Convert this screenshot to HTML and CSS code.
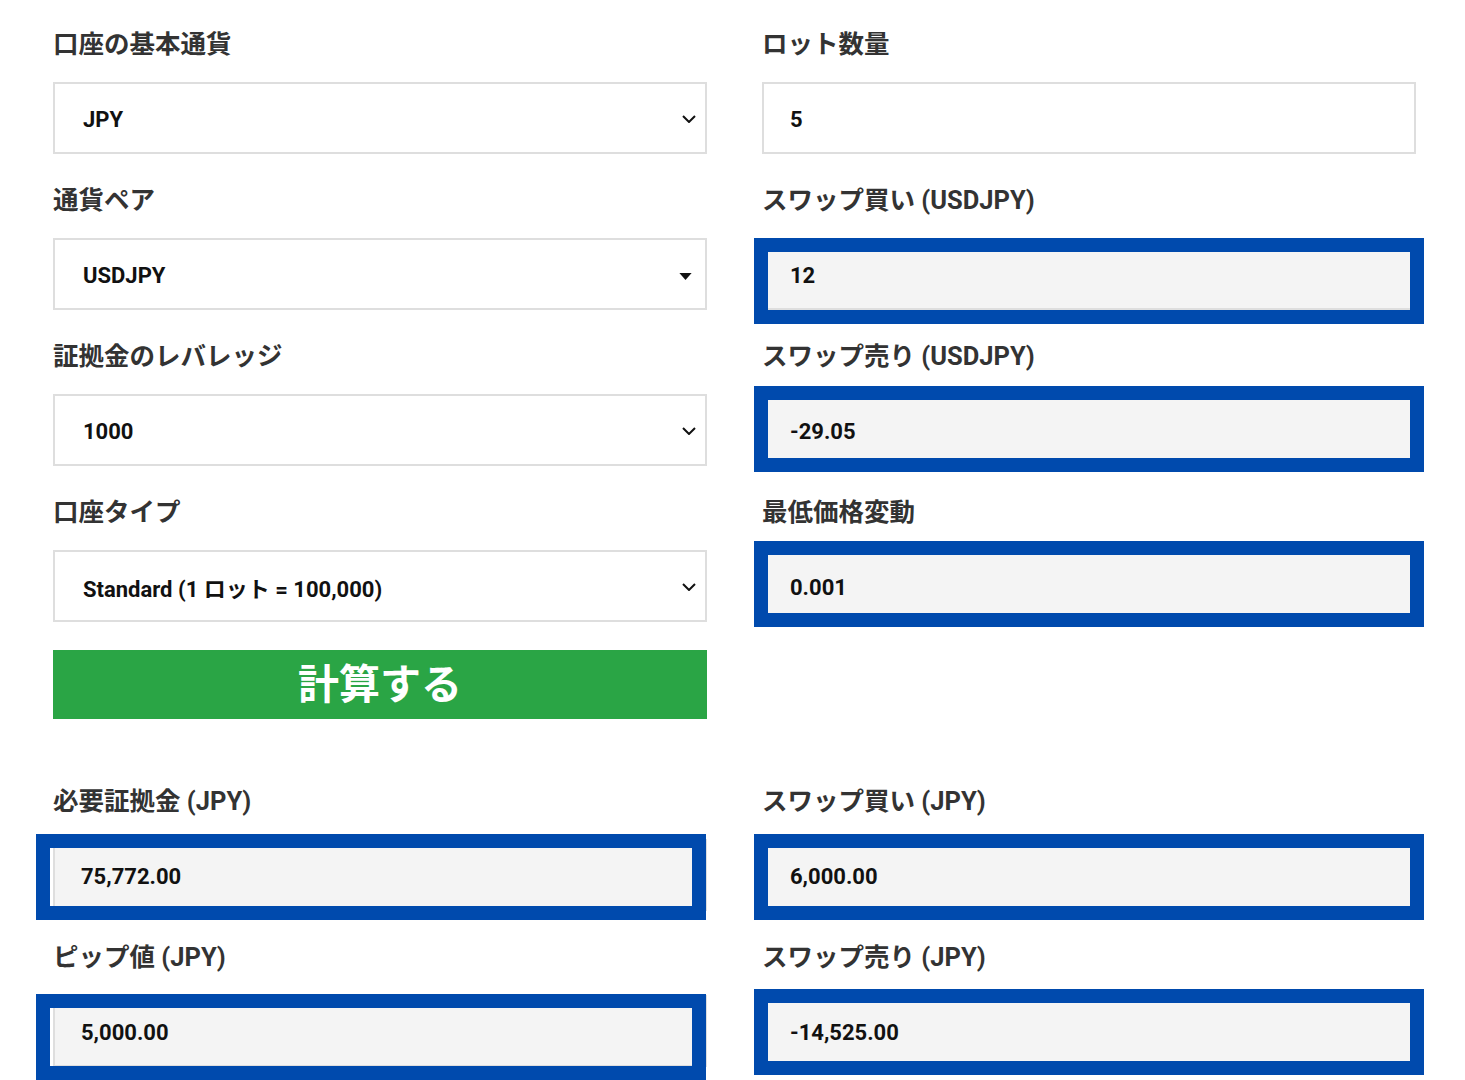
FILE: index.html
```html
<!DOCTYPE html>
<html lang="ja">
<head>
<meta charset="utf-8">
<title>計算機</title>
<link rel="stylesheet" href="styles.css">
</head>
<body>
<div class="calc">
  <div class="field">
    <div class="label">口座の基本通貨</div>
    <div class="box select">JPY<svg class="chev" viewBox="0 0 14 8"><path d="M1 1 L7 7 L13 1" fill="none" stroke="#111" stroke-width="2"/></svg></div>
  </div>
  <div class="field">
    <div class="label">ロット数量</div>
    <div class="box">5</div>
  </div>

  <div class="field">
    <div class="label">通貨ペア</div>
    <div class="box select">USDJPY<svg class="tri" viewBox="0 0 14 8"><path d="M0 0 L14 0 L7 8 Z" fill="#111"/></svg></div>
  </div>
  <div class="field">
    <div class="label">スワップ買い (USDJPY)</div>
    <div class="box ro">12<span class="hl hl-r1"></span></div>
  </div>

  <div class="field">
    <div class="label">証拠金のレバレッジ</div>
    <div class="box select">1000<svg class="chev" viewBox="0 0 14 8"><path d="M1 1 L7 7 L13 1" fill="none" stroke="#111" stroke-width="2"/></svg></div>
  </div>
  <div class="field">
    <div class="label">スワップ売り (USDJPY)</div>
    <div class="box ro">-29.05<span class="hl hl-r2"></span></div>
  </div>

  <div class="field">
    <div class="label">口座タイプ</div>
    <div class="box select">Standard (1 ロット = 100,000)<svg class="chev" viewBox="0 0 14 8"><path d="M1 1 L7 7 L13 1" fill="none" stroke="#111" stroke-width="2"/></svg></div>
  </div>
  <div class="field">
    <div class="label">最低価格変動</div>
    <div class="box ro">0.001<span class="hl hl-r3"></span></div>
  </div>

  <button class="calc-btn" type="button">計算する</button>
  <div></div>

  <div class="field result-top">
    <div class="label">必要証拠金 (JPY)</div>
    <div class="box ro">75,772.00<span class="hl hl-l hl-l1"></span></div>
  </div>
  <div class="field result-top">
    <div class="label">スワップ買い (JPY)</div>
    <div class="box ro">6,000.00<span class="hl hl-r4"></span></div>
  </div>

  <div class="field">
    <div class="label">ピップ値 (JPY)</div>
    <div class="box ro">5,000.00<span class="hl hl-l hl-l2"></span></div>
  </div>
  <div class="field">
    <div class="label">スワップ売り (JPY)</div>
    <div class="box ro">-14,525.00<span class="hl hl-r5"></span></div>
  </div>
</div>
</body>
</html>
```

FILE: styles.css
```css
html, body {
  margin: 0;
  padding: 0;
  background: #ffffff;
}

body {
  font-family: Roboto, "Noto Sans CJK JP", sans-serif;
}

.calc {
  display: grid;
  grid-template-columns: 654px 654px;
  column-gap: 55px;
  row-gap: 31px;
  padding: 29px 0 40px 53px;
}

.field {
  display: flex;
  flex-direction: column;
}

.label {
  font-size: 25.5px;
  line-height: 30px;
  height: 30px;
  margin-bottom: 23px;
  font-weight: 700;
  color: #333333;
  white-space: nowrap;
}

.box {
  position: relative;
  box-sizing: border-box;
  height: 72px;
  border: 2px solid #dedede;
  background: #ffffff;
  display: flex;
  align-items: center;
  padding-left: 26px;
  padding-top: 2px;
  font-size: 22px;
  font-weight: 700;
  color: #111111;
}

.box.ro {
  background: #f4f4f4;
}

.select {
  padding-left: 28px;
}

.chev {
  position: absolute;
  right: 9px;
  top: 50%;
  width: 14px;
  height: 8px;
  margin-top: -3px;
}

.tri {
  position: absolute;
  right: 13px;
  top: 50%;
  width: 13px;
  height: 7px;
  margin-top: -1px;
}

.calc-btn {
  margin-top: -3px;
  height: 69px;
  border: none;
  background: #2aa545;
  color: #ffffff;
  font-family: "Noto Sans CJK JP", sans-serif;
  font-size: 41px;
  font-weight: 700;
  line-height: 60px;
  padding: 0 0 8px 0;
  cursor: pointer;
}

.result-top {
  margin-top: 36px;
}

.hl {
  position: absolute;
  box-sizing: border-box;
  width: 670px;
  height: 86px;
  border: 14px solid #004aad;
  left: -10px;
  pointer-events: none;
}

.hl-l {
  left: -19px;
}

.hl-r1 { top: -2px; }
.hl-r2 { top: -10px; }
.hl-r3 { top: -11px; }
.hl-r4 { top: -7px; }
.hl-r5 { top: -8px; }
.hl-l1 { top: -7px; }
.hl-l2 { top: -3px; }
```
